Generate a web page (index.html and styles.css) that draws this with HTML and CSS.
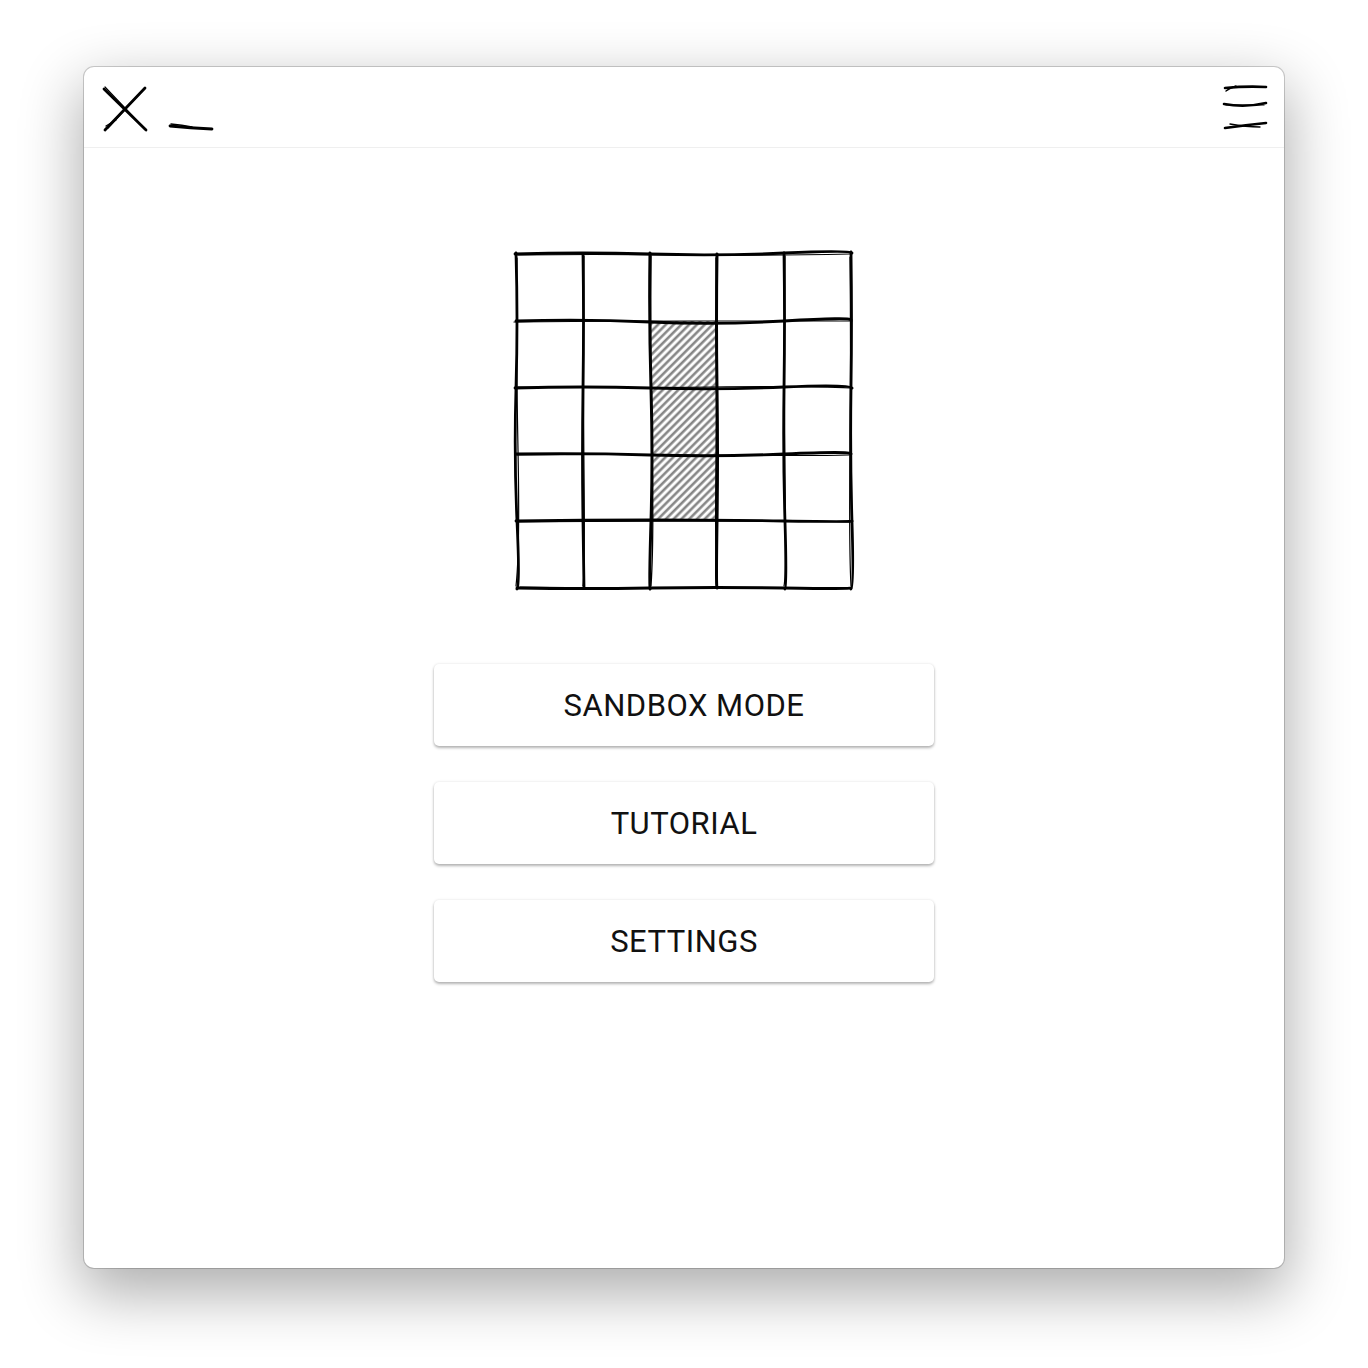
FILE: index.html
```html
<!DOCTYPE html>
<html>
<head>
<meta charset="utf-8">
<link rel="stylesheet" href="styles.css">
</head>
<body>
<div class="stage">
  <div class="window">
    <header class="titlebar">
      <svg class="win-controls" width="120" height="81" viewBox="0 0 120 81">
        <g fill="none" stroke="#000" stroke-linecap="round">
          <path d="M4,22 L46,63" stroke-width="2.8"/>
          <path d="M5,20 L45,62" stroke-width="1.2"/>
          <path d="M45,21 L5,63" stroke-width="2.8"/>
          <path d="M43,23 L8,61" stroke-width="1.2"/>
          <path d="M6,59 L16,53" stroke-width="1.4"/>
          <path d="M70,59 Q90,61 112,62" stroke-width="2.8"/>
          <path d="M71,57 Q82,58 92,60" stroke-width="1.4"/>
        </g>
      </svg>
      <svg class="menu-icon" width="56" height="81" viewBox="0 0 56 81">
        <g fill="none" stroke="#000" stroke-linecap="round">
          <path d="M9,21 Q30,19 50,20" stroke-width="2.6"/>
          <path d="M10,24 Q14,21 20,19" stroke-width="1.4"/>
          <path d="M8,37 Q29,41 50,36" stroke-width="2.6"/>
          <path d="M10,38 Q28,38 48,38" stroke-width="1.2"/>
          <path d="M9,61 Q30,58 50,56" stroke-width="2.6"/>
          <path d="M14,57 Q30,60 44,60" stroke-width="1.3"/>
        </g>
      </svg>
    </header>
    <main class="content">
      <svg class="board" width="344" height="344" viewBox="0 0 344 344">
        <defs>
          <pattern id="hatch" width="5.5" height="5.5" patternUnits="userSpaceOnUse" patternTransform="rotate(45)">
            <line x1="2" y1="0" x2="2" y2="5.5" stroke="#858585" stroke-width="2.6"/>
          </pattern>
        </defs>
        <rect x="139" y="71" width="66" height="200" fill="url(#hatch)"/>
        <g fill="none" stroke="#000" stroke-linecap="round" stroke-linejoin="round">
          <path d="M3,4 Q70,2 138,4 T272,3 T340,3" stroke-width="2.8"/>
          <path d="M6,5 Q80,4 160,5 T338,4" stroke-width="1.2"/>
          <path d="M4,71 Q72,69 138,72 T272,71 T339,70" stroke-width="2.8"/>
          <path d="M2,72 Q90,71 180,71 T340,71" stroke-width="1.2"/>
          <path d="M3,138 Q70,136 138,138 T272,137 T340,138" stroke-width="2.8"/>
          <path d="M6,137 Q100,138 200,137 T338,138" stroke-width="1.2"/>
          <path d="M4,204 Q72,203 138,205 T272,204 T339,204" stroke-width="2.8"/>
          <path d="M5,205 Q100,204 200,205 T337,205" stroke-width="1.2"/>
          <path d="M4,271 Q70,270 138,270 T272,271 T340,271" stroke-width="2.8"/>
          <path d="M6,272 Q100,271 210,271 T338,272" stroke-width="1.2"/>
          <path d="M5,338 Q72,339 138,338 T272,338 T339,338" stroke-width="2.8"/>
          <path d="M8,337 Q100,338 200,338 T336,338" stroke-width="1.2"/>
          <path d="M4,3 Q6,70 4,138 T5,271 T5,339" stroke-width="2.8"/>
          <path d="M5,8 Q4,100 6,200 T4,336" stroke-width="1.2"/>
          <path d="M71,4 Q72,70 71,138 T71,272 T72,338" stroke-width="2.8"/>
          <path d="M72,6 Q71,120 72,220 T71,336" stroke-width="1.2"/>
          <path d="M138,3 Q137,70 139,138 T139,272 T138,339" stroke-width="3"/>
          <path d="M139,6 Q138,110 140,200 T139,336" stroke-width="1.3"/>
          <path d="M205,4 Q204,70 205,138 T205,272 T205,338" stroke-width="3"/>
          <path d="M204,8 Q205,110 204,210 T205,335" stroke-width="1.3"/>
          <path d="M272,3 Q273,70 272,138 T273,272 T273,339" stroke-width="2.8"/>
          <path d="M273,6 Q272,130 273,230 T272,336" stroke-width="1.2"/>
          <path d="M339,2 Q340,70 339,138 T340,272 T339,339" stroke-width="2.8"/>
          <path d="M338,7 Q339,100 338,200 T339,336" stroke-width="1.2"/>
        </g>
      </svg>
      <nav class="menu">
        <button class="menu-btn">SANDBOX MODE</button>
        <button class="menu-btn">TUTORIAL</button>
        <button class="menu-btn">SETTINGS</button>
      </nav>
    </main>
  </div>
</div>
</body>
</html>
```

FILE: styles.css
```css
html, body {
  margin: 0;
  padding: 0;
  background: #ffffff;
}

.stage {
  padding: 67px 84px 100px 84px;
  display: flex;
  justify-content: flex-start;
}

.window {
  width: 1200px;
  height: 1201px;
  box-sizing: border-box;
  background: #ffffff;
  border-radius: 10px;
  box-shadow: 0 0 0 1px rgba(0, 0, 0, 0.18), 0 22px 60px 4px rgba(0, 0, 0, 0.32);
  display: flex;
  flex-direction: column;
  overflow: hidden;
}

.titlebar {
  height: 81px;
  flex: none;
  box-sizing: border-box;
  border-bottom: 1px solid #efefef;
  padding: 0 12px 0 16px;
  display: flex;
  justify-content: space-between;
  align-items: flex-start;
}

.win-controls,
.menu-icon {
  display: block;
}

.content {
  flex: 1;
  display: flex;
  flex-direction: column;
  align-items: center;
  padding-top: 102px;
}

.board {
  display: block;
}

.menu {
  margin-top: 70px;
  display: flex;
  flex-direction: column;
  gap: 36px;
}

.menu-btn {
  width: 500px;
  height: 82px;
  border: none;
  border-radius: 5px;
  background: #ffffff;
  font-family: Roboto, "Liberation Sans", sans-serif;
  font-size: 31px;
  font-weight: 400;
  letter-spacing: 0.5px;
  color: #111111;
  box-shadow: 0 2px 3px rgba(0, 0, 0, 0.28), 0 0 3px rgba(0, 0, 0, 0.1);
  cursor: pointer;
  padding: 0;
}
```
